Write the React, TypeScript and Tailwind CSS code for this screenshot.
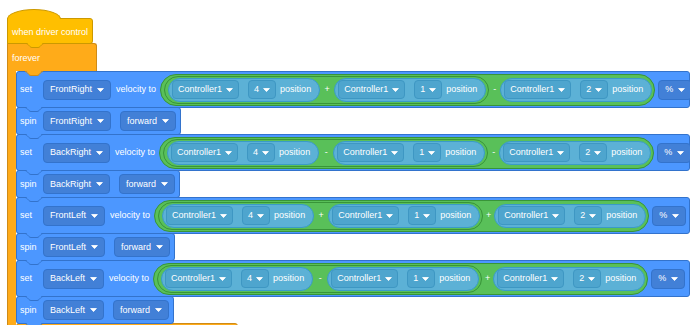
import React from 'react'

const rows = [
  { motor: 'FrontRight', ops: ['+', '-'] },
  { motor: 'BackRight', ops: ['-', '-'] },
  { motor: 'FrontLeft', ops: ['+', '+'] },
  { motor: 'BackLeft', ops: ['-', '+'] },
]

function Arrow() {
  return (
    <svg width="7" height="4" viewBox="0 0 7 4" className="shrink-0">
      <path d="M0.6 0.5h5.8L3.5 3.6z" fill="#fff" stroke="#fff" strokeWidth="0.8" strokeLinejoin="round" />
    </svg>
  )
}

// tab sticking out under a stack block
function Tab({ fill, stroke, className }: { fill: string; stroke: string; className: string }) {
  return (
    <svg width="18" height="5" viewBox="0 0 18 5" className={'absolute top-full z-10 ' + className}>
      <path d="M0 0C1 0 1.5 .4 2 1L4 3.4C4.5 4 5 4.4 6 4.4H12C13 4.4 13.5 4 14 3.4L16 1C16.5 .4 17 0 18 0Z" fill={fill} />
      <path d="M0 .5C1 .5 1.5 .9 2 1.5L4 3.6C4.5 4.1 5 4.5 6 4.5H12C13 4.5 13.5 4.1 14 3.6L16 1.5C16.5 .9 17 .5 18 .5" fill="none" stroke={stroke} strokeWidth="1" />
    </svg>
  )
}

function BlueDrop({ label, className = '' }: { label: string; className?: string }) {
  return (
    <div className={'flex h-[20px] shrink-0 items-center gap-[5px] rounded-[4px] border border-[#3373CC] bg-[#4280D7] px-[6px] text-white ' + className}>
      <span>{label}</span>
      <Arrow />
    </div>
  )
}

function SenseDrop({ label, className = '' }: { label: string; className?: string }) {
  return (
    <div className={'flex h-[19px] shrink-0 items-center gap-[4px] rounded-[4px] border border-[#3E97C3] bg-[#4EA5CE] px-[5px] text-white ' + className}>
      <span>{label}</span>
      <Arrow />
    </div>
  )
}

function Position({ axis }: { axis: string }) {
  return (
    <div className="flex h-[24px] shrink-0 items-center rounded-full border border-[#3A9BC7] bg-[#5CB1D6] pl-[3px] pr-[8px] text-white">
      <SenseDrop label="Controller1" />
      <SenseDrop label={axis} className="ml-[9px]" />
      <span className="ml-[4px]">position</span>
    </div>
  )
}

function SetRow({ motor, ops, first }: { motor: string; ops: string[]; first?: boolean }) {
  return (
    <div className={'relative flex h-[37px] shrink-0 items-center rounded-[3px] border border-[#3373CC] bg-[#4C97FF] pl-[3px] pr-[4px] text-white ' + (first ? '' : '-mt-px')}>
      <span className="w-[23px] shrink-0">set</span>
      <BlueDrop label={motor} />
      <span className="ml-[5px] shrink-0">velocity to</span>
      <div className="ml-[4px] flex h-[32px] shrink-0 items-center rounded-full border border-[#389438] bg-[#59C059] pl-[3px] pr-[2px]">
        <div className="flex h-[28px] items-center rounded-full border border-[#389438] bg-[#59C059] pl-[3px] pr-[2px]">
          <Position axis="4" />
          <span className="w-[14px] text-center">{ops[0]}</span>
          <Position axis="1" />
        </div>
        <span className="w-[11px] text-center">{ops[1]}</span>
        <Position axis="2" />
      </div>
      <BlueDrop label="%" className="ml-[3px] px-[5px]" />
      <Tab fill="#4C97FF" stroke="#3373CC" className="left-[8px]" />
    </div>
  )
}

function SpinRow({ motor }: { motor: string }) {
  return (
    <div className="relative -mt-px flex h-[28px] shrink-0 items-center rounded-[3px] border border-[#3373CC] bg-[#4C97FF] pl-[3px] pr-[4px] text-white">
      <span className="w-[23px] shrink-0">spin</span>
      <BlueDrop label={motor} />
      <BlueDrop label="forward" className="ml-[9px]" />
      <Tab fill="#4C97FF" stroke="#3373CC" className="left-[8px]" />
    </div>
  )
}

export default function App() {
  return (
    <div className="h-[325px] w-[690px] overflow-hidden bg-white font-['Liberation_Sans',Arial,sans-serif] text-[9px] leading-none">
      {/* hat block */}
      <div className="relative z-20 ml-[7px] mt-[9px] flex flex-col items-start">
        <div className="relative z-10 -mb-px h-[10px] w-[54px] rounded-t-[27px_10px] border border-b-0 border-[#CC9900] bg-[#FFBF00]" />
        <div className="relative flex h-[26px] w-[86px] items-center rounded-r-[3px] border border-[#CC9900] bg-[#FFBF00] pl-[4px] pt-[2px] text-white">
          when driver control
          <Tab fill="#FFBF00" stroke="#CC9900" className="left-[18px]" />
        </div>
      </div>

      {/* forever loop */}
      <div className="-mt-px ml-[7px] flex flex-col items-start">
        <div className="relative z-10 flex h-[28px] w-[90px] items-center rounded-tr-[3px] border border-b-0 border-[#CF8B17] bg-[#FFAB19] pl-[4px] pt-[2px] text-white">
          forever
          <Tab fill="#FFAB19" stroke="#CF8B17" className="left-[17px]" />
        </div>
        <div className="flex">
          <div className="w-[9px] shrink-0 border-l border-[#CF8B17] bg-[#FFAB19]" />
          <div className="flex flex-col items-start">
            {rows.map((r, i) => (
              <React.Fragment key={r.motor}>
                <SetRow motor={r.motor} ops={r.ops} first={i === 0} />
                <SpinRow motor={r.motor} />
              </React.Fragment>
            ))}
            <div className="-mt-px h-[20px] w-[222px] rounded-[3px] border border-[#CF8B17] bg-[#FFAB19]" />
          </div>
        </div>
      </div>
    </div>
  )
}
